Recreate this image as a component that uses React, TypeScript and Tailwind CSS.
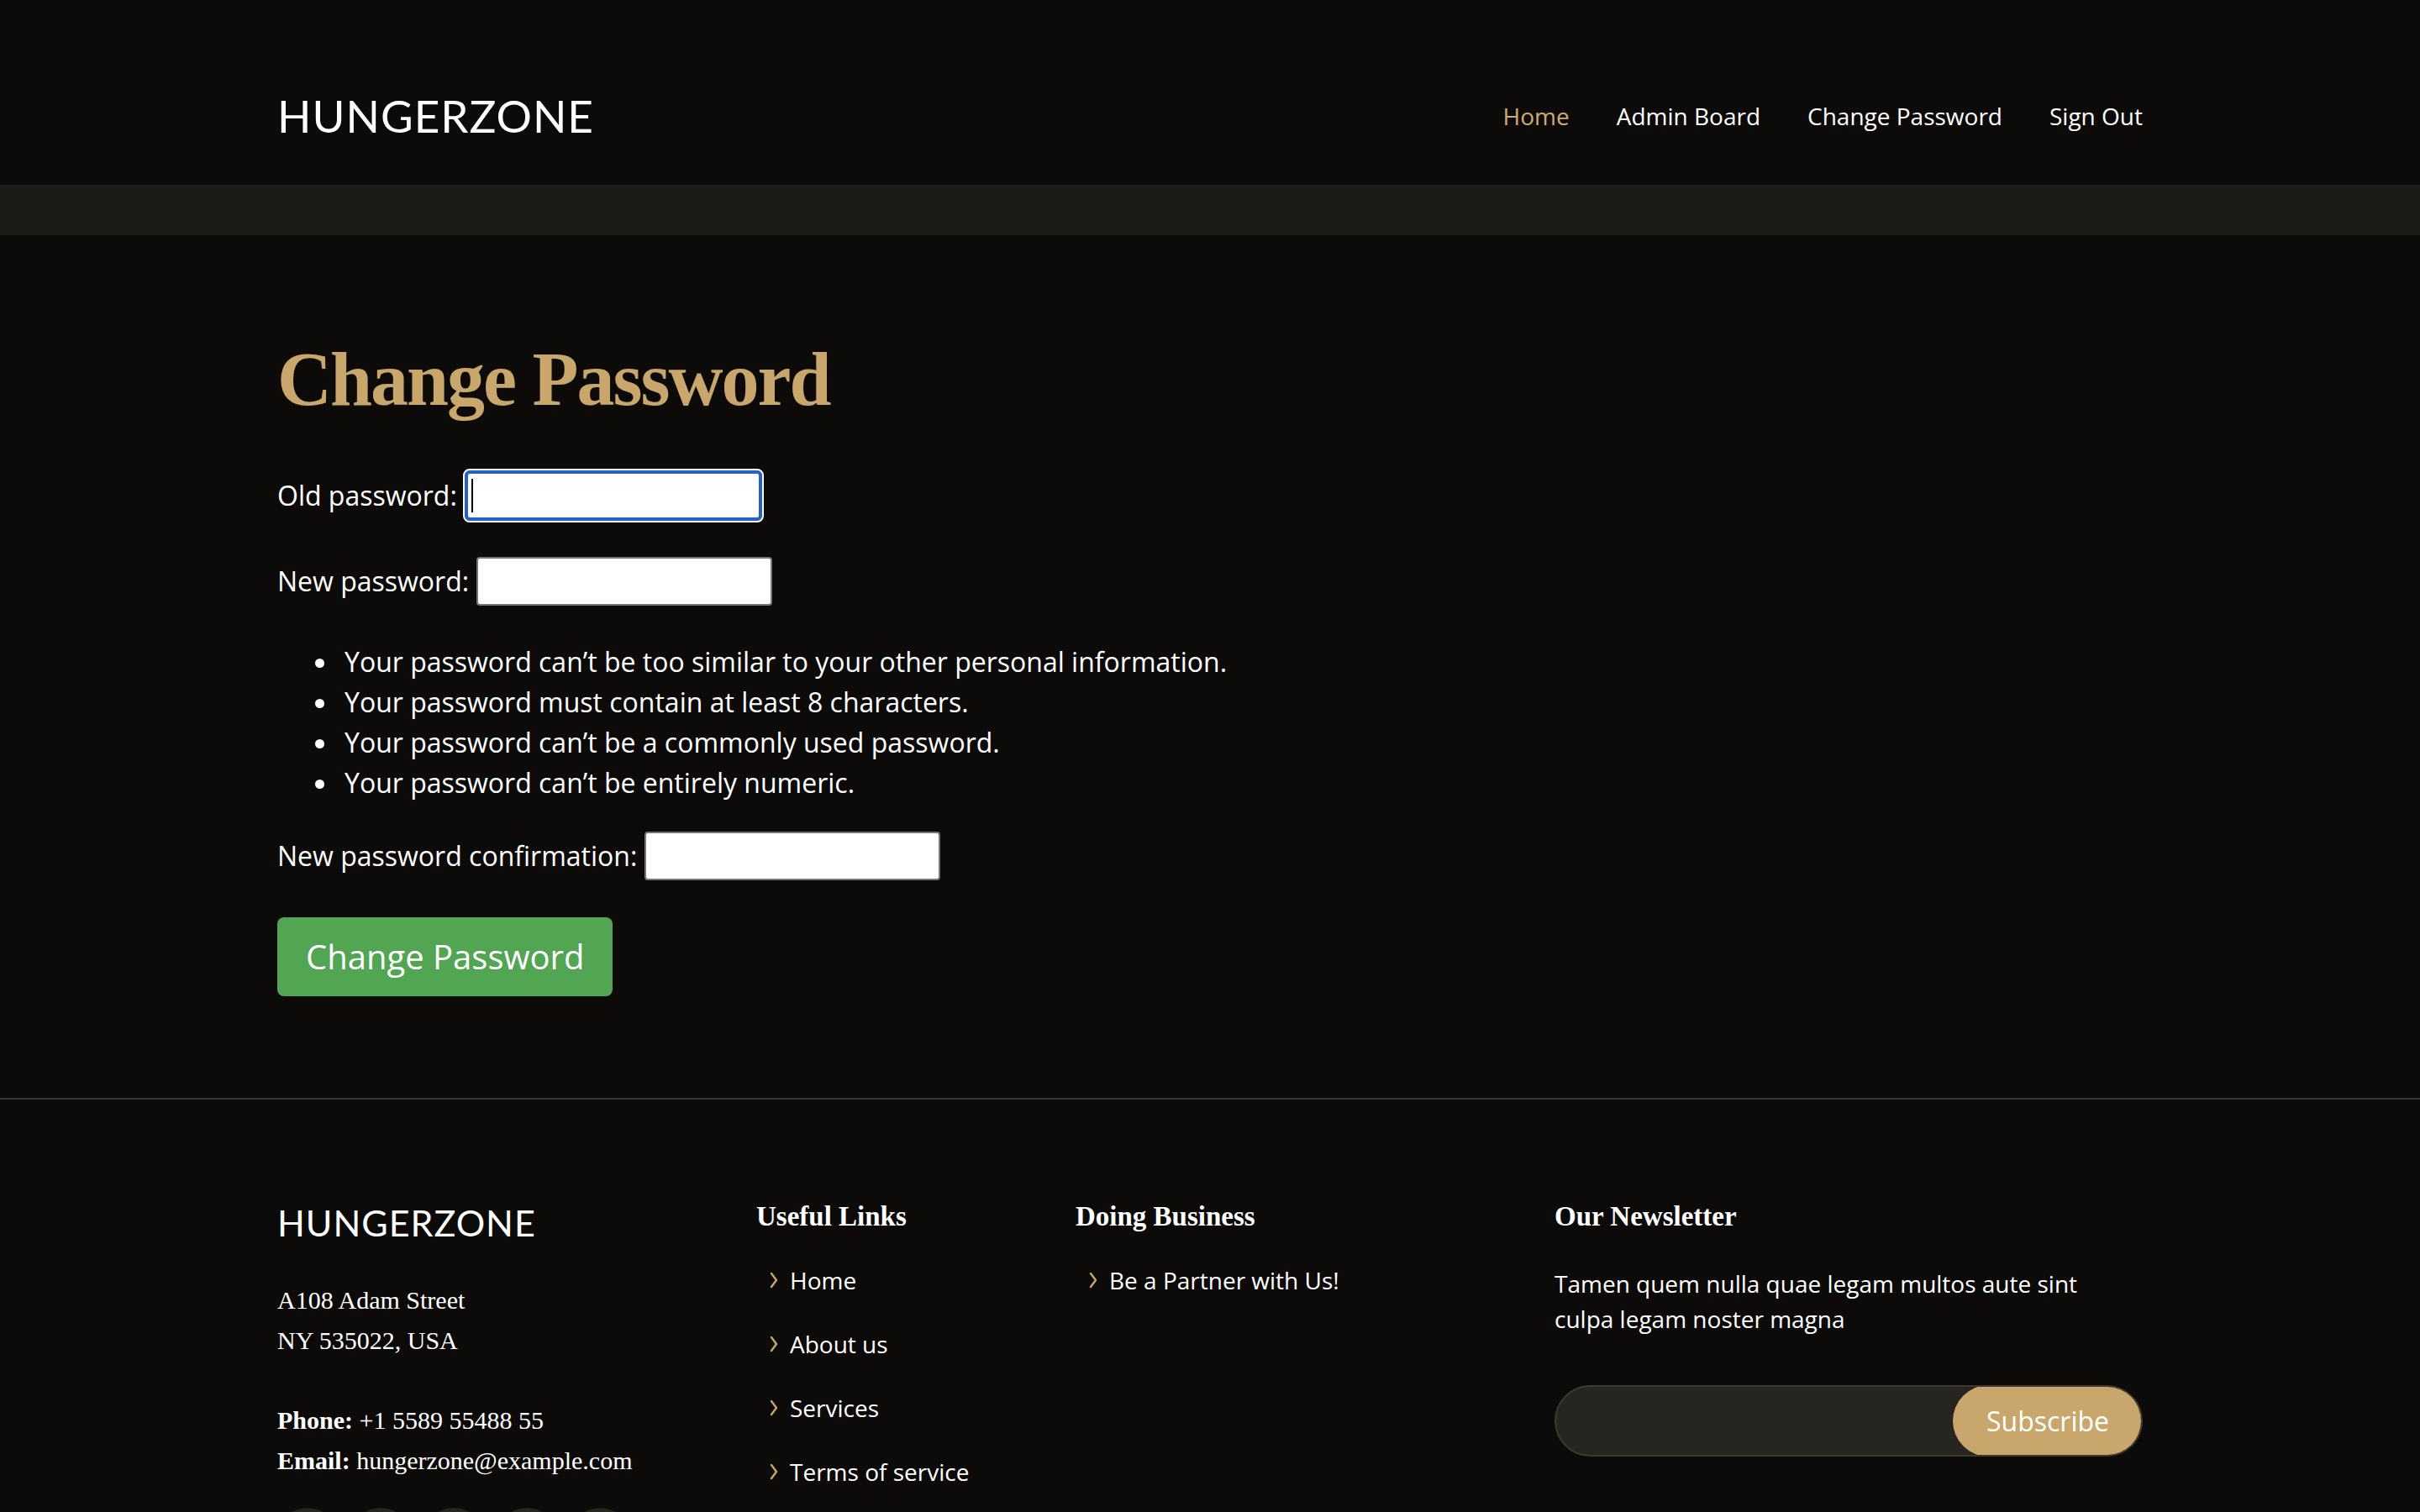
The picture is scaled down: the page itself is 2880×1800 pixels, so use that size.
import React from "react";

const GOLD = "#c9a66b";

function Chevron() {
  return (
    <svg width="12" height="24" viewBox="0 0 12 24" className="shrink-0">
      <path d="M3 4 L9 12 L3 20" fill="none" stroke={GOLD} strokeWidth="2.4" strokeLinecap="round" strokeLinejoin="round" />
    </svg>
  );
}

function FooterLink({ label }: { label: string }) {
  return (
    <li className="flex items-center h-[42px] leading-[42px]">
      <span className="w-[40px] pl-[15px] flex items-center"><Chevron /></span>
      <span>{label}</span>
    </li>
  );
}

export default function App() {
  const sans = { fontFamily: '"Open Sans", "Noto Sans", sans-serif' };
  const serif = { fontFamily: '"Liberation Serif", "DejaVu Serif", serif' };
  return (
    <div className="min-h-screen w-full bg-[#0c0b09] text-white" style={sans}>
      {/* Header */}
      <header className="h-[220px] pt-[56px] flex items-center bg-[#0c0b09]">
        <div className="w-[2220px] mx-auto flex items-center justify-between">
          <div
            className="text-[53px] leading-[60px] font-normal tracking-[1px] text-white"
            style={{ fontFamily: '"Lato", "Inter", sans-serif' }}
          >
            HUNGERZONE
          </div>
          <nav className="flex items-center gap-[56px] text-[28px] leading-[40px]">
            <a className="text-[#cfab74]">Home</a>
            <a className="text-white">Admin Board</a>
            <a className="text-white">Change Password</a>
            <a className="text-white">Sign Out</a>
          </nav>
        </div>
      </header>

      {/* Grey band */}
      <div className="h-[60px] bg-[#1c1b18]" />

      {/* Main */}
      <main className="w-[2220px] mx-auto pt-[118px] pb-[121px]">
        <h1
          className="text-[90px] leading-[108px] font-bold text-[#c9a66b] tracking-[-2px]"
          style={serif}
        >
          Change Password
        </h1>

        <form className="mt-[54px] text-[32px]">
          <div className="flex items-center h-[60px]">
            <label className="mr-[9px]">Old password:</label>
            <div className="relative">
              <input
                type="password"
                className="w-[354px] h-[60px] bg-white border-[4px] border-[#2462c8] rounded-[6px] outline outline-2 outline-white"
              />
              <span className="absolute left-[8px] top-[10px] w-[2px] h-[40px] bg-black" />
            </div>
          </div>

          <div className="flex items-center h-[59px] mt-[42px]">
            <label className="mr-[9px]">New password:</label>
            <input
              type="password"
              className="w-[352px] h-[58px] bg-white border-2 border-[#767676] rounded-[4px]"
            />
          </div>

          <ul className="list-disc pl-[74px] mt-[43px] leading-[48px] text-[32px]">
            <li className="pl-[6px]">Your password can’t be too similar to your other personal information.</li>
            <li className="pl-[6px]">Your password must contain at least 8 characters.</li>
            <li className="pl-[6px]">Your password can’t be a commonly used password.</li>
            <li className="pl-[6px]">Your password can’t be entirely numeric.</li>
          </ul>

          <div className="flex items-center h-[59px] mt-[33px]">
            <label className="mr-[9px]">New password confirmation:</label>
            <input
              type="password"
              className="w-[352px] h-[58px] bg-white border-2 border-[#767676] rounded-[4px]"
            />
          </div>

          <button
            type="button"
            className="mt-[44px] h-[94px] px-[34px] bg-[#52a552] text-white text-[40px] leading-[90px] rounded-[8px]"
          >
            Change Password
          </button>
        </form>
      </main>

      {/* Footer */}
      <footer className="border-t-2 border-[#37362e] pt-[117px] pb-[120px]">
        <div className="w-[2220px] mx-auto grid grid-cols-[570px_380px_570px_700px]">
          {/* Col 1 */}
          <div>
            <div
              className="text-[43px] leading-[60px] tracking-[1px] text-white"
              style={{ fontFamily: '"Lato", "Inter", sans-serif' }}
            >
              HUNGERZONE
            </div>
            <div className="mt-[38px] text-[30px] leading-[47.5px]" style={serif}>
              <p>A108 Adam Street</p>
              <p>NY 535022, USA</p>
              <p className="mt-[48px]"><strong>Phone:</strong> +1 5589 55488 55</p>
              <p><strong>Email:</strong> hungerzone@example.com</p>
            </div>
            <div className="mt-[33px] flex gap-[15px]">
              {[0, 1, 2, 3, 4].map((i) => (
                <div key={i} className="w-[72px] h-[72px] rounded-full bg-[#26251f]" />
              ))}
            </div>
          </div>

          {/* Col 2 */}
          <div>
            <h4 className="text-[33px] leading-[44px] font-bold" style={serif}>
              Useful Links
            </h4>
            <ul className="mt-[33px] flex flex-col gap-[34px] text-[28px]">
              <FooterLink label="Home" />
              <FooterLink label="About us" />
              <FooterLink label="Services" />
              <FooterLink label="Terms of service" />
            </ul>
          </div>

          {/* Col 3 */}
          <div>
            <h4 className="text-[33px] leading-[44px] font-bold" style={serif}>
              Doing Business
            </h4>
            <ul className="mt-[33px] flex flex-col gap-[34px] text-[28px]">
              <FooterLink label="Be a Partner with Us!" />
            </ul>
          </div>

          {/* Col 4 */}
          <div>
            <h4 className="text-[33px] leading-[44px] font-bold" style={serif}>
              Our Newsletter
            </h4>
            <p className="mt-[37px] text-[28px] leading-[42px] pr-[40px]">
              Tamen quem nulla quae legam multos aute sint culpa legam noster magna
            </p>
            <div className="mt-[58px] h-[85px] w-[700px] flex rounded-full bg-[#27251f] border-2 border-[#3d3a30] overflow-hidden">
              <input type="email" className="flex-1 bg-transparent outline-none px-[30px] text-[28px]" />
              <button type="button" className="px-[40px] bg-[#c9a66b] text-white text-[32px] rounded-full -my-[2px] -mr-[2px] h-[85px]">
                Subscribe
              </button>
            </div>
          </div>
        </div>
      </footer>
    </div>
  );
}
